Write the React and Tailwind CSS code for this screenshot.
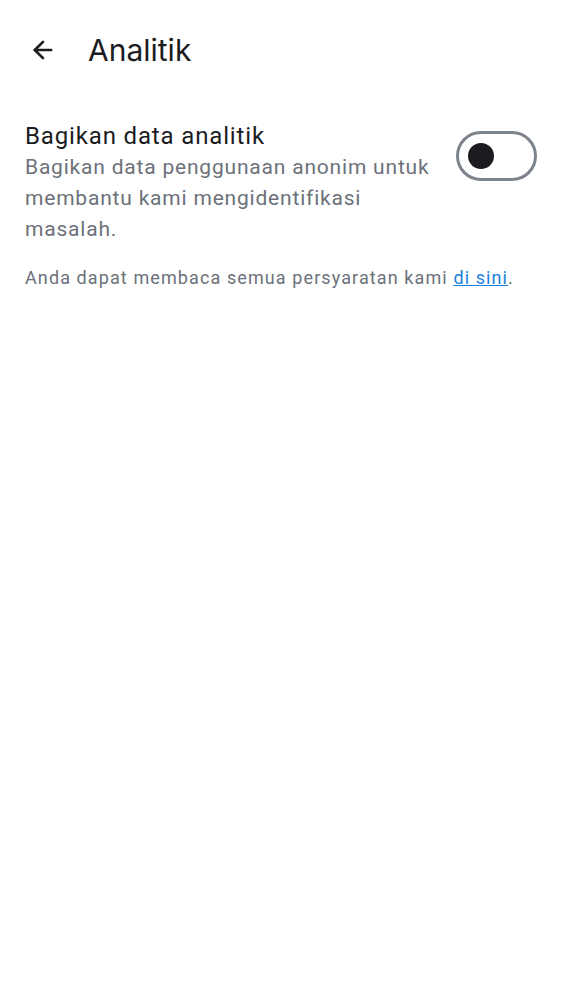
import { ArrowLeft } from 'lucide-react';

export default function App() {
  return (
    <div className="w-[562px] h-[1000px] bg-white" style={{ fontFamily: 'Roboto, sans-serif' }}>
      {/* Top bar */}
      <div className="flex items-center h-[100px] pl-[29px]">
        <button className="w-[28px] h-[28px] flex items-center justify-center text-[#1b1c1f]">
          <ArrowLeft size={30} strokeWidth={2.3} />
        </button>
        <h1 className="ml-[31px] text-[30px] text-[#1b1c1f]" style={{ fontFamily: 'Inter, sans-serif' }}>
          Analitik
        </h1>
      </div>

      {/* Setting row */}
      <div className="flex items-start justify-between pl-[25px] pr-[25px] pt-[21px]">
        <div className="w-[420px]">
          <div className="text-[24px] leading-[31px] tracking-[0.85px] text-[#1b1c1f]">Bagikan data analitik</div>
          <div className="text-[21px] leading-[31px] text-[#6c717a] tracking-[0.8px]">
            Bagikan data penggunaan anonim untuk membantu kami mengidentifikasi masalah.
          </div>
        </div>
        <div className="mt-[10px] w-[81px] h-[50px] rounded-full border-[3px] border-[#7d838b] flex items-center pl-[9px] shrink-0">
          <div className="w-[26px] h-[26px] rounded-full bg-[#1b1c1f]" />
        </div>
      </div>

      {/* Footer note */}
      <div className="pl-[25px] pt-[19px] text-[18px] tracking-[1.1px] text-[#6c717a]">
        Anda dapat membaca semua persyaratan kami{' '}
        <a href="#" className="text-[#1a80dc] underline">di sini</a>.
      </div>
    </div>
  );
}
